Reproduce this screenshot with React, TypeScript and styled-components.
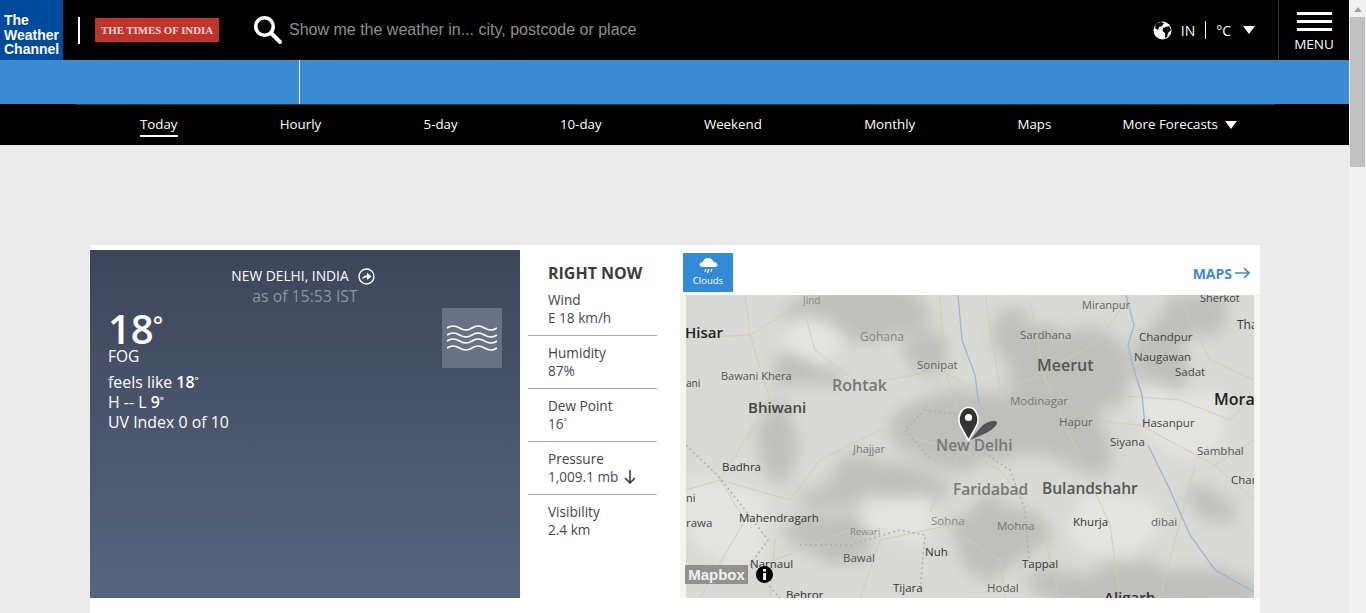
import React from 'react'
import styled, { createGlobalStyle } from 'styled-components'

const GlobalStyle = createGlobalStyle`
  html, body { margin: 0; padding: 0; height: 100%; overflow: hidden; background: #ececec; }
  body { font-family: "Open Sans", "Liberation Sans", sans-serif; }
  * { box-sizing: border-box; }
`

const NAV_ITEMS = ['Today', 'Hourly', '5-day', '10-day', 'Weekend', 'Monthly', 'Maps']

const CONDITIONS = [
  { label: 'Wind', value: 'E 18 km/h' },
  { label: 'Humidity', value: '87%' },
  { label: 'Dew Point', value: '16', degree: true },
  { label: 'Pressure', value: '1,009.1 mb', falling: true },
  { label: 'Visibility', value: '2.4 km' },
]

type MapLabel = [string, number, number, number, string, number?]

// x, baseline in page pixels, the map svg viewBox uses the same numbers
const MAP_LABELS: MapLabel[] = [
  ['Jind', 803, 304, 10, '#8a8a86'],
  ['Miranpur', 1082, 309, 11, '#666'],
  ['Sherkot', 1200, 302, 11, '#444'],
  ['Tha', 1237, 329, 12, '#333'],
  ['Hisar', 685, 338, 15, '#222', 600],
  ['Gohana', 860, 341, 12, '#858582'],
  ['Sardhana', 1020, 339, 11.5, '#666'],
  ['Chandpur', 1139, 341, 11.5, '#444'],
  ['Naugawan', 1134, 361, 11.5, '#444'],
  ['Sadat', 1175, 376, 11.5, '#444'],
  ['Sonipat', 917, 369, 11.5, '#666'],
  ['Meerut', 1037, 371, 16, '#555', 600],
  ['Bawani Khera', 721, 380, 11, '#555'],
  ['Rohtak', 832, 391, 16, '#777', 600],
  ['ani', 686, 387, 10, '#444'],
  ['Modinagar', 1010, 405, 11.5, '#777'],
  ['Mora', 1214, 405, 16, '#222', 600],
  ['Bhiwani', 748, 413, 15, '#444', 600],
  ['Hapur', 1059, 426, 11.5, '#666'],
  ['Hasanpur', 1142, 427, 11.5, '#444'],
  ['New Delhi', 936, 451, 15.5, '#777', 600],
  ['Jhajjar', 853, 453, 11, '#777'],
  ['Siyana', 1110, 446, 11.5, '#444'],
  ['Sambhal', 1197, 455, 11.5, '#555'],
  ['Badhra', 722, 471, 11.5, '#333'],
  ['Char', 1231, 484, 11.5, '#444'],
  ['Faridabad', 953, 495, 15.5, '#777', 600],
  ['Bulandshahr', 1042, 494, 15.5, '#555', 600],
  ['ni', 686, 502, 11, '#444'],
  ['Mahendragarh', 739, 522, 11.5, '#333'],
  ['Khurja', 1073, 526, 11.5, '#333'],
  ['dibai', 1151, 526, 11.5, '#666'],
  ['rawa', 686, 527, 11.5, '#444'],
  ['Sohna', 931, 525, 11.5, '#888'],
  ['Mohna', 997, 530, 11.5, '#777'],
  ['Rewari', 850, 535, 9.5, '#888'],
  ['Nuh', 925, 556, 11.5, '#333'],
  ['Bawal', 843, 562, 11.5, '#555'],
  ['Narnaul', 750, 568, 11.5, '#333'],
  ['Tappal', 1022, 568, 11.5, '#333'],
  ['Tijara', 893, 592, 11.5, '#333'],
  ['Behror', 786, 599, 11.5, '#333'],
  ['Hodal', 987, 592, 11.5, '#555'],
  ['Aligarh', 1104, 603, 15, '#333', 600],
]

const SHADE_BLOBS = [
  [855, 312, 72, 30], [1070, 375, 65, 50], [1190, 312, 45, 22], [975, 430, 85, 38],
  [870, 488, 80, 26], [775, 440, 16, 44], [1000, 540, 48, 40], [1150, 590, 115, 24],
  [1205, 500, 16, 12], [835, 540, 42, 22], [1070, 440, 42, 28], [925, 350, 22, 20],
  [805, 375, 34, 16], [1010, 330, 18, 30], [1225, 510, 9, 12], [1160, 350, 22, 45],
]

const LIGHT_BLOBS = [
  [815, 342, 30, 22], [905, 520, 34, 26], [1110, 520, 50, 30], [730, 520, 42, 42], [1190, 420, 45, 35],
]

const ROADS = [
  'M686 338 L750 335 L802 303 L815 350 L860 385 L940 370 L985 395 L1030 380 L1100 340 L1130 295',
  'M745 295 L750 335 L770 400 L720 480 L745 520 L700 598',
  'M720 480 L686 490 M720 480 L790 500 L820 460 L880 430 L960 450 L1000 470 L1040 520 L1060 598',
  'M940 295 L945 370 L965 430 M985 295 L1000 390 M1030 300 L1045 380 L1090 420 L1140 425 L1215 465 L1254 440',
  'M1045 380 L1110 525 L1120 598 M960 450 L930 510 L945 525 L1000 560 L1005 598',
  'M950 525 L880 540 L860 598 M775 560 L850 530 M775 540 L770 598 M1195 465 L1160 598 M1215 465 L1254 500',
  'M1110 395 L1180 400 L1230 420 L1254 395 M1180 298 L1210 360 L1254 380',
]

const BOUNDARIES = [
  'M686 445 L720 478 L745 510 L768 540 L750 565 L780 598',
  'M930 458 L905 430 L925 410 L965 415',
  'M980 450 L1010 470 L1025 510 L1030 570',
  'M800 545 L850 545 L900 530 L925 535 L920 590',
]

const RIVERS = [
  'M1126 295 L1134 325 L1128 345 L1134 370 L1142 395 L1145 425',
  'M1148 445 L1170 490 L1190 535 L1215 570 L1254 592',
  'M958 295 L962 340 L975 375 L979 405',
]

const Page = styled.div`
  display: flex;
  height: 613px;
  overflow: hidden;
`

const Main = styled.main`
  width: 1349px;
  flex: none;
`

const Scrollbar = styled.div`
  width: 17px;
  flex: none;
  height: 613px;
  background: #f1f1f1;
  display: flex;
  flex-direction: column;
  align-items: center;
`

const ScrollArrow = styled.div`
  width: 0;
  height: 0;
  margin: 7px 0 5px;
  border-left: 4px solid transparent;
  border-right: 4px solid transparent;
  border-bottom: 5px solid #a3a3a3;
`

const ScrollThumb = styled.div`
  width: 15px;
  height: 150px;
  background: #c1c1c1;
`

const TopBar = styled.header`
  height: 60px;
  background: #000;
  display: flex;
  align-items: center;
  color: #fff;
`

const BrandLogo = styled.div`
  width: 63px;
  height: 60px;
  flex: none;
  background: #004a9e;
  color: #fff;
  font: 700 14px/14.5px "Liberation Sans", Arial, sans-serif;
  padding: 13px 0 0 4px;
`

const BrandRule = styled.div`
  width: 2px;
  height: 27px;
  background: #fff;
  margin: 0 15px;
  flex: none;
`

const PartnerLogo = styled.div`
  width: 124px;
  height: 24px;
  flex: none;
  background: #c0342b;
  color: #f3dcd6;
  font: 700 10.8px/24px "Liberation Serif", "Times New Roman", serif;
  text-align: center;
  white-space: nowrap;
`

const SearchIcon = styled.svg`
  width: 30px;
  height: 30px;
  margin: 0 6px 0 34px;
  flex: none;
`

const SearchHint = styled.div`
  flex: 1;
  color: #8f8f8f;
  font: 16px "Liberation Sans", Arial, sans-serif;
  white-space: nowrap;
`

const LocaleBar = styled.div`
  display: flex;
  align-items: center;
  font-size: 14px;
  margin-right: 23px;
`

const GlobeIcon = styled.svg`
  margin-right: 9px;
`

const LocaleRule = styled.span`
  width: 1px;
  height: 18px;
  background: #fff;
  margin: 0 10px;
`

const Caret = styled.span<{ $gap: number }>`
  display: inline-block;
  width: 0;
  height: 0;
  border-left: 6.5px solid transparent;
  border-right: 6.5px solid transparent;
  border-top: 8px solid #fff;
  margin-left: ${(p) => p.$gap}px;
`

const MenuButton = styled.div`
  width: 71px;
  height: 60px;
  flex: none;
  border-left: 1px solid #333;
  display: flex;
  flex-direction: column;
  align-items: center;
  padding-top: 12px;
  font-size: 13.5px;
  line-height: 16px;
`

const MenuBar = styled.span`
  width: 35px;
  height: 3px;
  background: #fff;
  margin-bottom: 5px;
`

const AdBand = styled.div`
  height: 44px;
  background: #3b8bd2;
  padding-left: 299px;
`

const AdRule = styled.div`
  width: 1px;
  height: 44px;
  background: #fff;
`

const NavBar = styled.nav`
  height: 41px;
  background: #000;
`

const NavList = styled.div`
  width: 1200px;
  height: 41px;
  margin-left: 75px;
  padding-left: 65px;
  border-top: 1px solid #333;
  display: flex;
  gap: 102.3px;
  color: #fff;
  font-size: 13.3px;
`

const NavLink = styled.span<{ $active?: boolean }>`
  height: 22px;
  margin-top: 10px;
  line-height: 18px;
  white-space: nowrap;
  border-bottom: ${(p) => (p.$active ? '2px solid #fff' : 'none')};
`

const NavMore = styled(NavLink)`
  margin-left: -31px;
`

const Canvas = styled.div`
  padding: 100px 0 0 90px;
`

const Module = styled.section`
  width: 1170px;
  height: 400px;
  background: #fff;
  padding-top: 5px;
  display: flex;
`

const CurrentPanel = styled.div`
  width: 430px;
  height: 348px;
  flex: none;
  background: linear-gradient(#3d4559, #56657f);
  color: #fff;
  padding: 16px 18px 0;
`

const Place = styled.div`
  display: flex;
  justify-content: center;
  align-items: center;
  gap: 9px;
  font-size: 13.8px;
  line-height: 20px;
  padding-right: 4px;
`

const AsOf = styled.div`
  text-align: center;
  color: #8d94a3;
  font-size: 15.8px;
  line-height: 20px;
`

const ReadingRow = styled.div`
  display: flex;
  justify-content: space-between;
`

const Temp = styled.div`
  font-size: 40px;
  line-height: 38px;
  font-weight: 600;
  margin: 4px 0 0;
`

const TempDegree = styled.span`
  font-size: 60%;
  line-height: 0;
  vertical-align: 0.42em;
  margin-left: -1px;
`

const Sup = styled.span`
  font-size: 60%;
  line-height: 0;
  vertical-align: 0.5em;
`

const Phrase = styled.div`
  font-size: 15.5px;
  line-height: 17px;
  margin-bottom: 7px;
`

const Detail = styled.div`
  font-size: 15.9px;
  line-height: 20px;

  b { font-weight: 600; }
`

const FogBox = styled.div`
  width: 60px;
  height: 60px;
  margin: 2px 0 0;
  background: #6a7185;
  display: flex;
  align-items: center;
  justify-content: center;
`

const NowPanel = styled.div`
  width: 160px;
  flex: none;
  padding-left: 8px;
`

const NowTitle = styled.h2`
  margin: 0;
  padding: 13px 0 0 20px;
  height: 33px;
  color: #3c3c3c;
  font-size: 16px;
  line-height: 20px;
  font-weight: 700;
`

const NowRow = styled.div`
  width: 129px;
  height: 53px;
  padding: 8px 0 0 20px;
  border-bottom: 1px solid #a8a8a8;
  font-size: 13.6px;
  line-height: 18px;
  color: #3f4c59;

  &:last-child { border-bottom: none; }
`

const NowLabel = styled.div`
  color: #444;
`

const NowValue = styled.div`
  display: flex;
  align-items: center;
  gap: 6px;
`

const MapColumn = styled.div`
  width: 580px;
  flex: none;
`

const MapHead = styled.div`
  height: 45px;
  display: flex;
  justify-content: space-between;
  padding: 3px 10px 0 3px;
`

const LayerTab = styled.div`
  width: 50px;
  height: 39px;
  background: #338ad6;
  color: #fff;
  font-size: 9.5px;
  display: flex;
  flex-direction: column;
  align-items: center;
  padding-top: 4px;
  line-height: 13px;
`

const MapsLink = styled.div`
  color: #4288d0;
  font-size: 14px;
  font-weight: 700;
  display: flex;
  align-items: center;
  gap: 3px;
  height: 40px;
`

const MapFrame = styled.div`
  position: relative;
  width: 580px;
  height: 303px;
  background: #f5f4ef;
  padding: 0 6px;
`

const MapImage = styled.svg`
  display: block;
  width: 568px;
  height: 303px;
  font-family: "Open Sans", sans-serif;
`

const MapPin = styled.svg`
  position: absolute;
  left: 277px;
  top: 111px;
`

const MapBadge = styled.div`
  position: absolute;
  left: 5px;
  top: 270px;
  display: flex;
  align-items: center;
  gap: 8px;
`

const MapBadgeName = styled.span`
  width: 63px;
  height: 19px;
  background: rgba(120, 120, 120, 0.75);
  color: #f2f2f2;
  font: 700 15px/19px "Liberation Sans", Arial, sans-serif;
  text-align: center;
`

function App() {
  return (
    <Page>
      <GlobalStyle />
      <Main>
        <TopBar>
          <BrandLogo>The<br />Weather<br />Channel</BrandLogo>
          <BrandRule />
          <PartnerLogo>THE TIMES OF INDIA</PartnerLogo>
          <SearchIcon viewBox="0 0 30 30">
            <circle cx="11.5" cy="11.5" r="8.8" fill="none" stroke="#fff" strokeWidth="3.6" />
            <path d="M18 18 L27 27" stroke="#fff" strokeWidth="4" strokeLinecap="round" />
          </SearchIcon>
          <SearchHint>Show me the weather in... city, postcode or place</SearchHint>
          <LocaleBar>
            <GlobeIcon width="19" height="19" viewBox="0 0 19 19">
              <circle cx="9.5" cy="9.5" r="9" fill="#fff" />
              <path d="M3 3 L8 1 L11 2 L9 5 L6 6 L5 9 L2 7 Z M10 7 L16 5 L18 9 L15 12 L14 16 L12 17 L12 12 L9.5 10 Z" fill="#000" />
            </GlobeIcon>
            IN
            <LocaleRule />
            °C
            <Caret $gap={12} />
          </LocaleBar>
          <MenuButton>
            <MenuBar />
            <MenuBar />
            <MenuBar />
            MENU
          </MenuButton>
        </TopBar>
        <AdBand>
          <AdRule />
        </AdBand>
        <NavBar>
          <NavList>
            {NAV_ITEMS.map((item) => (
              <NavLink key={item} $active={item === 'Today'}>{item}</NavLink>
            ))}
            <NavMore>
              More Forecasts
              <Caret $gap={7} />
            </NavMore>
          </NavList>
        </NavBar>
        <Canvas>
          <Module>
            <CurrentPanel>
              <Place>
                NEW DELHI, INDIA
                <svg width="17" height="17" viewBox="0 0 17 17">
                  <circle cx="8.5" cy="8.5" r="7.5" fill="none" stroke="#fff" strokeWidth="1.4" />
                  <path d="M4 11.5 C4.5 8.5 6.5 7.2 9 7.2 V4.8 L13.5 8.5 L9 12 V9.6 C7 9.6 5.5 10 4 11.5 Z" fill="#fff" />
                </svg>
              </Place>
              <AsOf>as of 15:53 IST</AsOf>
              <ReadingRow>
                <div>
                  <Temp>18<TempDegree>°</TempDegree></Temp>
                  <Phrase>FOG</Phrase>
                  <Detail>feels like <b>18<Sup>°</Sup></b></Detail>
                  <Detail>H -- L <b>9<Sup>°</Sup></b></Detail>
                  <Detail>UV Index 0 of 10</Detail>
                </div>
                <FogBox>
                  <svg width="50" height="26" viewBox="0 0 50 26" fill="none" stroke="#fff" strokeWidth="1.7">
                    {[3, 10, 16, 23].map((y) => (
                      <path key={y} d={`M0 ${y} q6 -4 12.5 0 t12.5 0 t12.5 0 t12.5 0`} />
                    ))}
                  </svg>
                </FogBox>
              </ReadingRow>
            </CurrentPanel>
            <NowPanel>
              <NowTitle>RIGHT NOW</NowTitle>
              {CONDITIONS.map((row) => (
                <NowRow key={row.label}>
                  <NowLabel>{row.label}</NowLabel>
                  <NowValue>
                    <span>{row.value}{row.degree && <Sup>°</Sup>}</span>
                    {row.falling && (
                      <svg width="12" height="14" viewBox="0 0 12 14" fill="none" stroke="#333" strokeWidth="1.5">
                        <path d="M6 0 V13 M1 8 L6 13 L11 8" />
                      </svg>
                    )}
                  </NowValue>
                </NowRow>
              ))}
            </NowPanel>
            <MapColumn>
              <MapHead>
                <LayerTab>
                  <svg width="19" height="17" viewBox="0 0 19 17">
                    <path d="M4 10 C1 10 0 8 1 6.5 C2 5 3 5 4 5 C4.5 2 7 0.5 10 1 C12.5 1.5 14 3 14.5 5 C17 5 18.5 6.5 18.5 8 C18.5 9.5 17 10 16 10 Z" fill="#fff" />
                    <path d="M7 12 L6 15 M10 12 L8.5 16 M13 12 L12 14.5" stroke="#fff" strokeWidth="1.2" />
                  </svg>
                  Clouds
                </LayerTab>
                <MapsLink>
                  MAPS
                  <svg width="15" height="12" viewBox="0 0 15 12" fill="none" stroke="#4288d0" strokeWidth="1.7">
                    <path d="M0 6 H14 M9 1 L14 6 L9 11" />
                  </svg>
                </MapsLink>
              </MapHead>
              <MapFrame>
                <MapImage viewBox="686 295 568 303">
                  <defs>
                    <filter id="soft" x="-30%" y="-30%" width="160%" height="160%">
                      <feTurbulence type="fractalNoise" baseFrequency="0.018" numOctaves="3" seed="4" result="noise" />
                      <feDisplacementMap in="SourceGraphic" in2="noise" scale="45" />
                      <feGaussianBlur stdDeviation="8" />
                    </filter>
                  </defs>
                  <rect x="686" y="295" width="568" height="303" fill="#d9d9d5" />
                  <g filter="url(#soft)" fill="#bfbfbc">
                    {SHADE_BLOBS.map(([cx, cy, rx, ry]) => (
                      <ellipse key={`${cx}-${cy}`} cx={cx} cy={cy} rx={rx} ry={ry} />
                    ))}
                  </g>
                  <g filter="url(#soft)" fill="#e4e4e1">
                    {LIGHT_BLOBS.map(([cx, cy, rx, ry]) => (
                      <ellipse key={`${cx}-${cy}`} cx={cx} cy={cy} rx={rx} ry={ry} />
                    ))}
                  </g>
                  <g fill="none" stroke="#d4cca8" strokeWidth="0.9">
                    {ROADS.map((d) => <path key={d} d={d} />)}
                  </g>
                  <g fill="none" stroke="#aeafb3" strokeWidth="1.5" strokeDasharray="2 3">
                    {BOUNDARIES.map((d) => <path key={d} d={d} />)}
                  </g>
                  <g fill="none" stroke="#9cb5d6" strokeWidth="1.3">
                    {RIVERS.map((d) => <path key={d} d={d} />)}
                  </g>
                  {MAP_LABELS.map(([name, x, y, size, color, weight]) => (
                    <text key={name} x={x} y={y} fontSize={size} fill={color} fontWeight={weight ?? 400}>{name}</text>
                  ))}
                </MapImage>
                <MapPin width="42" height="36" viewBox="0 0 42 36">
                  <path d="M13 34 L24 21 C30 15 38 14 40 16 C41 19 34 25 27 28 Z" fill="#555" />
                  <path d="M11.5 34.5 L3.5 20 C-0.5 12 4 1.5 11.5 1.2 C19 1.5 23.5 12 19.5 20 Z" fill="#333" stroke="#fff" strokeWidth="1.6" />
                  <circle cx="11.5" cy="11.5" r="3.6" fill="#fff" />
                </MapPin>
                <MapBadge>
                  <MapBadgeName>Mapbox</MapBadgeName>
                  <svg width="17" height="17" viewBox="0 0 17 17">
                    <circle cx="8.5" cy="8.5" r="8.5" fill="#000" />
                    <rect x="7.2" y="7" width="2.8" height="7" fill="#fff" />
                    <rect x="7.2" y="3" width="2.8" height="2.6" fill="#fff" />
                  </svg>
                </MapBadge>
              </MapFrame>
            </MapColumn>
          </Module>
        </Canvas>
      </Main>
      <Scrollbar>
        <ScrollArrow />
        <ScrollThumb />
      </Scrollbar>
    </Page>
  )
}

export default App
